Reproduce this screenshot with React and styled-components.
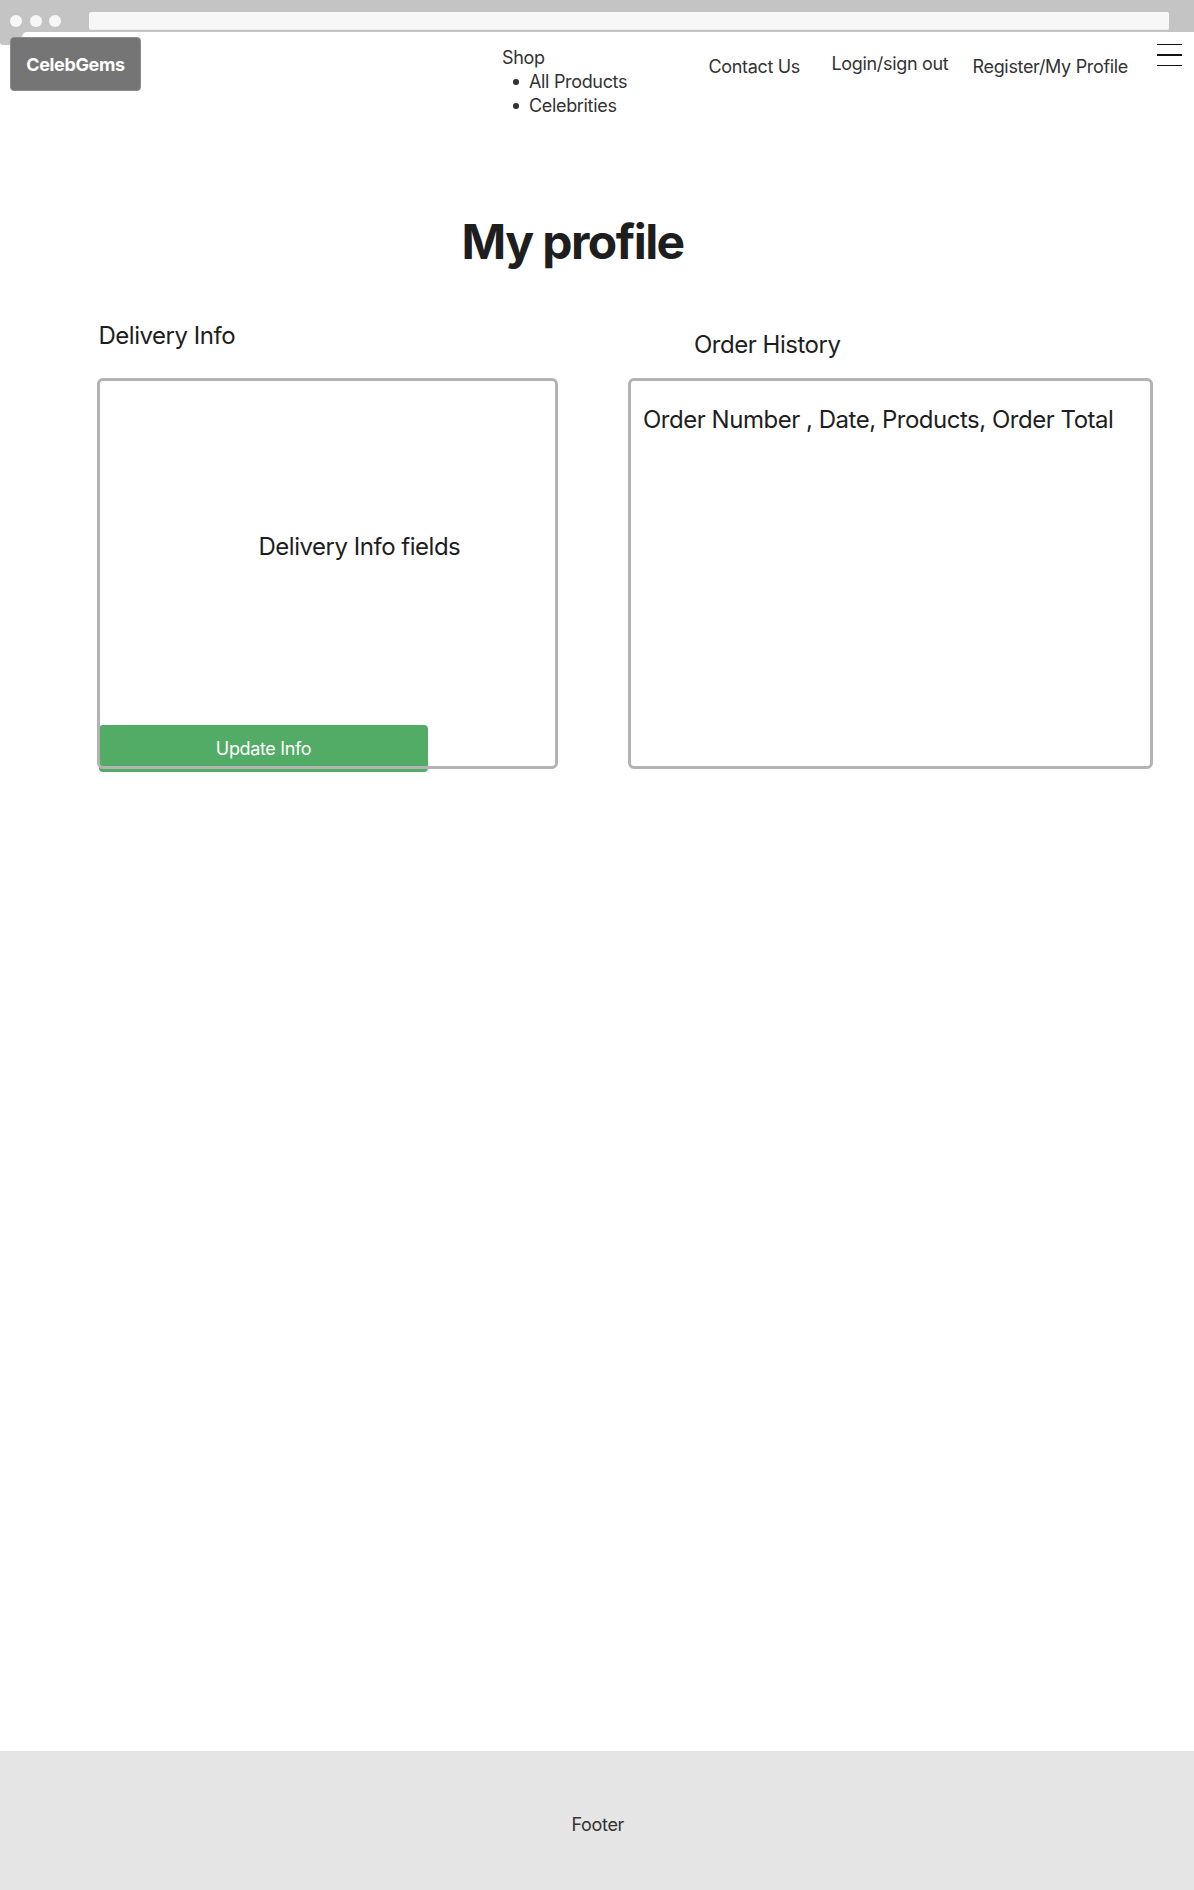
import React from "react";
import styled, { createGlobalStyle } from "styled-components";

const GlobalStyle = createGlobalStyle`
  *, *::before, *::after { box-sizing: border-box; }
  body {
    margin: 0;
    background: #fff;
    font-family: Inter, "Liberation Sans", sans-serif;
    color: #1e1e1e;
  }
`;

const Page = styled.div`
  display: flex;
  flex-direction: column;
  width: 1194px;
  height: 1890px;
  overflow: hidden;
`;

const BrowserBar = styled.div`
  position: relative;
  display: flex;
  flex: none;
  height: 32px;
  padding: 12px 0 0 10px;
  background: #c4c4c4;
`;

const BarCorner = styled.div`
  position: absolute;
  top: 32px;
  left: 0;
  width: 30px;
  height: 13px;
  border-radius: 0 0 0 3px;
  background: #c4c4c4;
  overflow: hidden;

  &::after {
    content: "";
    position: absolute;
    inset: 0 0 0 22px;
    border-top-left-radius: 5px;
    background: #fff;
  }
`;

const Dots = styled.div`
  display: flex;
  gap: 7.7px;
  width: 79px;
  padding-top: 3px;
`;

const Dot = styled.span`
  width: 12px;
  height: 12px;
  border-radius: 50%;
  background: #f7f7f7;
`;

const AddressField = styled.div`
  width: 1080px;
  height: 18px;
  border-radius: 2px;
  border-bottom: 1px solid #ededed;
  background: #f7f7f7;
`;

const Header = styled.header`
  position: relative;
  display: grid;
  grid-template-columns: 492px 206.5px 123px 141px 184.5px 25px;
  align-items: start;
  flex: none;
  height: 168px;
  padding-left: 10px;
`;

const Logo = styled.div`
  display: flex;
  align-items: center;
  justify-content: center;
  width: 131px;
  height: 53.5px;
  margin-top: 5px;
  padding-top: 1px;
  border: 1px solid #8b8b8b;
  border-radius: 4px;
  background: #757575;
  color: #fff;
  font-size: 18px;
  font-weight: 700;
  letter-spacing: -0.36px;
`;

const NavItem = styled.div`
  padding-top: ${(p) => p.$top}px;
  color: #333;
  font-size: 18px;
  line-height: 24px;
  letter-spacing: -0.33px;
  white-space: nowrap;
`;

const SubList = styled.ul`
  margin: 0;
  padding: 0 0 0 11px;
  list-style: none;
`;

const SubItem = styled.li`
  display: flex;
  align-items: center;
  gap: 10.5px;

  &::before {
    content: "";
    width: 5.5px;
    height: 5.5px;
    border-radius: 50%;
    background: #333;
  }
`;

const MenuButton = styled.div`
  display: flex;
  flex-direction: column;
  gap: 9px;
  margin-top: 11.5px;
`;

const MenuLine = styled.span`
  height: 1.5px;
  background: #111;
`;

const Title = styled.h1`
  flex: none;
  margin: 0 0 0 461.5px;
  height: 110px;
  padding-top: 12px;
  font-size: 48px;
  line-height: 60px;
  font-weight: 700;
  letter-spacing: -1.55px;
`;

const Columns = styled.main`
  display: grid;
  grid-template-columns: 461px 525px;
  column-gap: 70px;
  align-content: start;
  flex: 1;
  padding-left: 97px;
`;

const Section = styled.section`
  isolation: isolate;
`;

const Text24 = styled.p`
  margin: 0;
  font-size: 24px;
  line-height: 30px;
  font-weight: 400;
  letter-spacing: -0.48px;
  white-space: nowrap;
`;

const SectionTitle = styled(Text24).attrs({ as: "h2" })`
  height: 68px;
  padding: ${(p) => p.$top}px 0 0 ${(p) => p.$left}px;
`;

const Panel = styled.div`
  display: flex;
  flex-direction: column;
  height: 391px;
  padding: ${(p) => p.$pad};
  border: 3px solid #b3b3b3;
  border-radius: 6px;
`;

const FieldsLabel = styled(Text24)`
  padding-left: 158.5px;
`;

const UpdateButton = styled.button`
  position: relative;
  z-index: -1;
  width: 329px;
  height: 47.5px;
  margin: auto 0 -6px -1px;
  padding: 2px 0 0;
  border: 0;
  border-radius: 4px;
  background: #52ac66;
  color: #fff;
  font: 400 18px/24px Inter, "Liberation Sans", sans-serif;
  letter-spacing: -0.36px;
`;

const Footer = styled.footer`
  flex: none;
  height: 139px;
  padding: 62px 0 0 571.5px;
  background: #e5e5e5;
  color: #333;
  font-size: 18px;
  line-height: 24px;
  letter-spacing: -0.33px;
`;

export default function App() {
  return (
    <Page>
      <GlobalStyle />
      <BrowserBar>
        <Dots>
          <Dot />
          <Dot />
          <Dot />
        </Dots>
        <AddressField />
        <BarCorner />
      </BrowserBar>
      <Header>
        <Logo>CelebGems</Logo>
        <NavItem $top={14}>
          Shop
          <SubList>
            <SubItem>All Products</SubItem>
            <SubItem>Celebrities</SubItem>
          </SubList>
        </NavItem>
        <NavItem $top={23}>Contact Us</NavItem>
        <NavItem $top={20}>Login/sign out</NavItem>
        <NavItem $top={23}>Register/My Profile</NavItem>
        <MenuButton>
          <MenuLine />
          <MenuLine />
          <MenuLine />
        </MenuButton>
      </Header>
      <Title>My profile</Title>
      <Columns>
        <Section>
          <SectionTitle $top={11} $left={1.5}>Delivery Info</SectionTitle>
          <Panel $pad="151px 0 0 0">
            <FieldsLabel>Delivery Info fields</FieldsLabel>
            <UpdateButton>Update Info</UpdateButton>
          </Panel>
        </Section>
        <Section>
          <SectionTitle $top={20} $left={66}>Order History</SectionTitle>
          <Panel $pad="24px 0 0 12px">
            <Text24>Order Number , Date, Products, Order Total</Text24>
          </Panel>
        </Section>
      </Columns>
      <Footer>Footer</Footer>
    </Page>
  );
}
